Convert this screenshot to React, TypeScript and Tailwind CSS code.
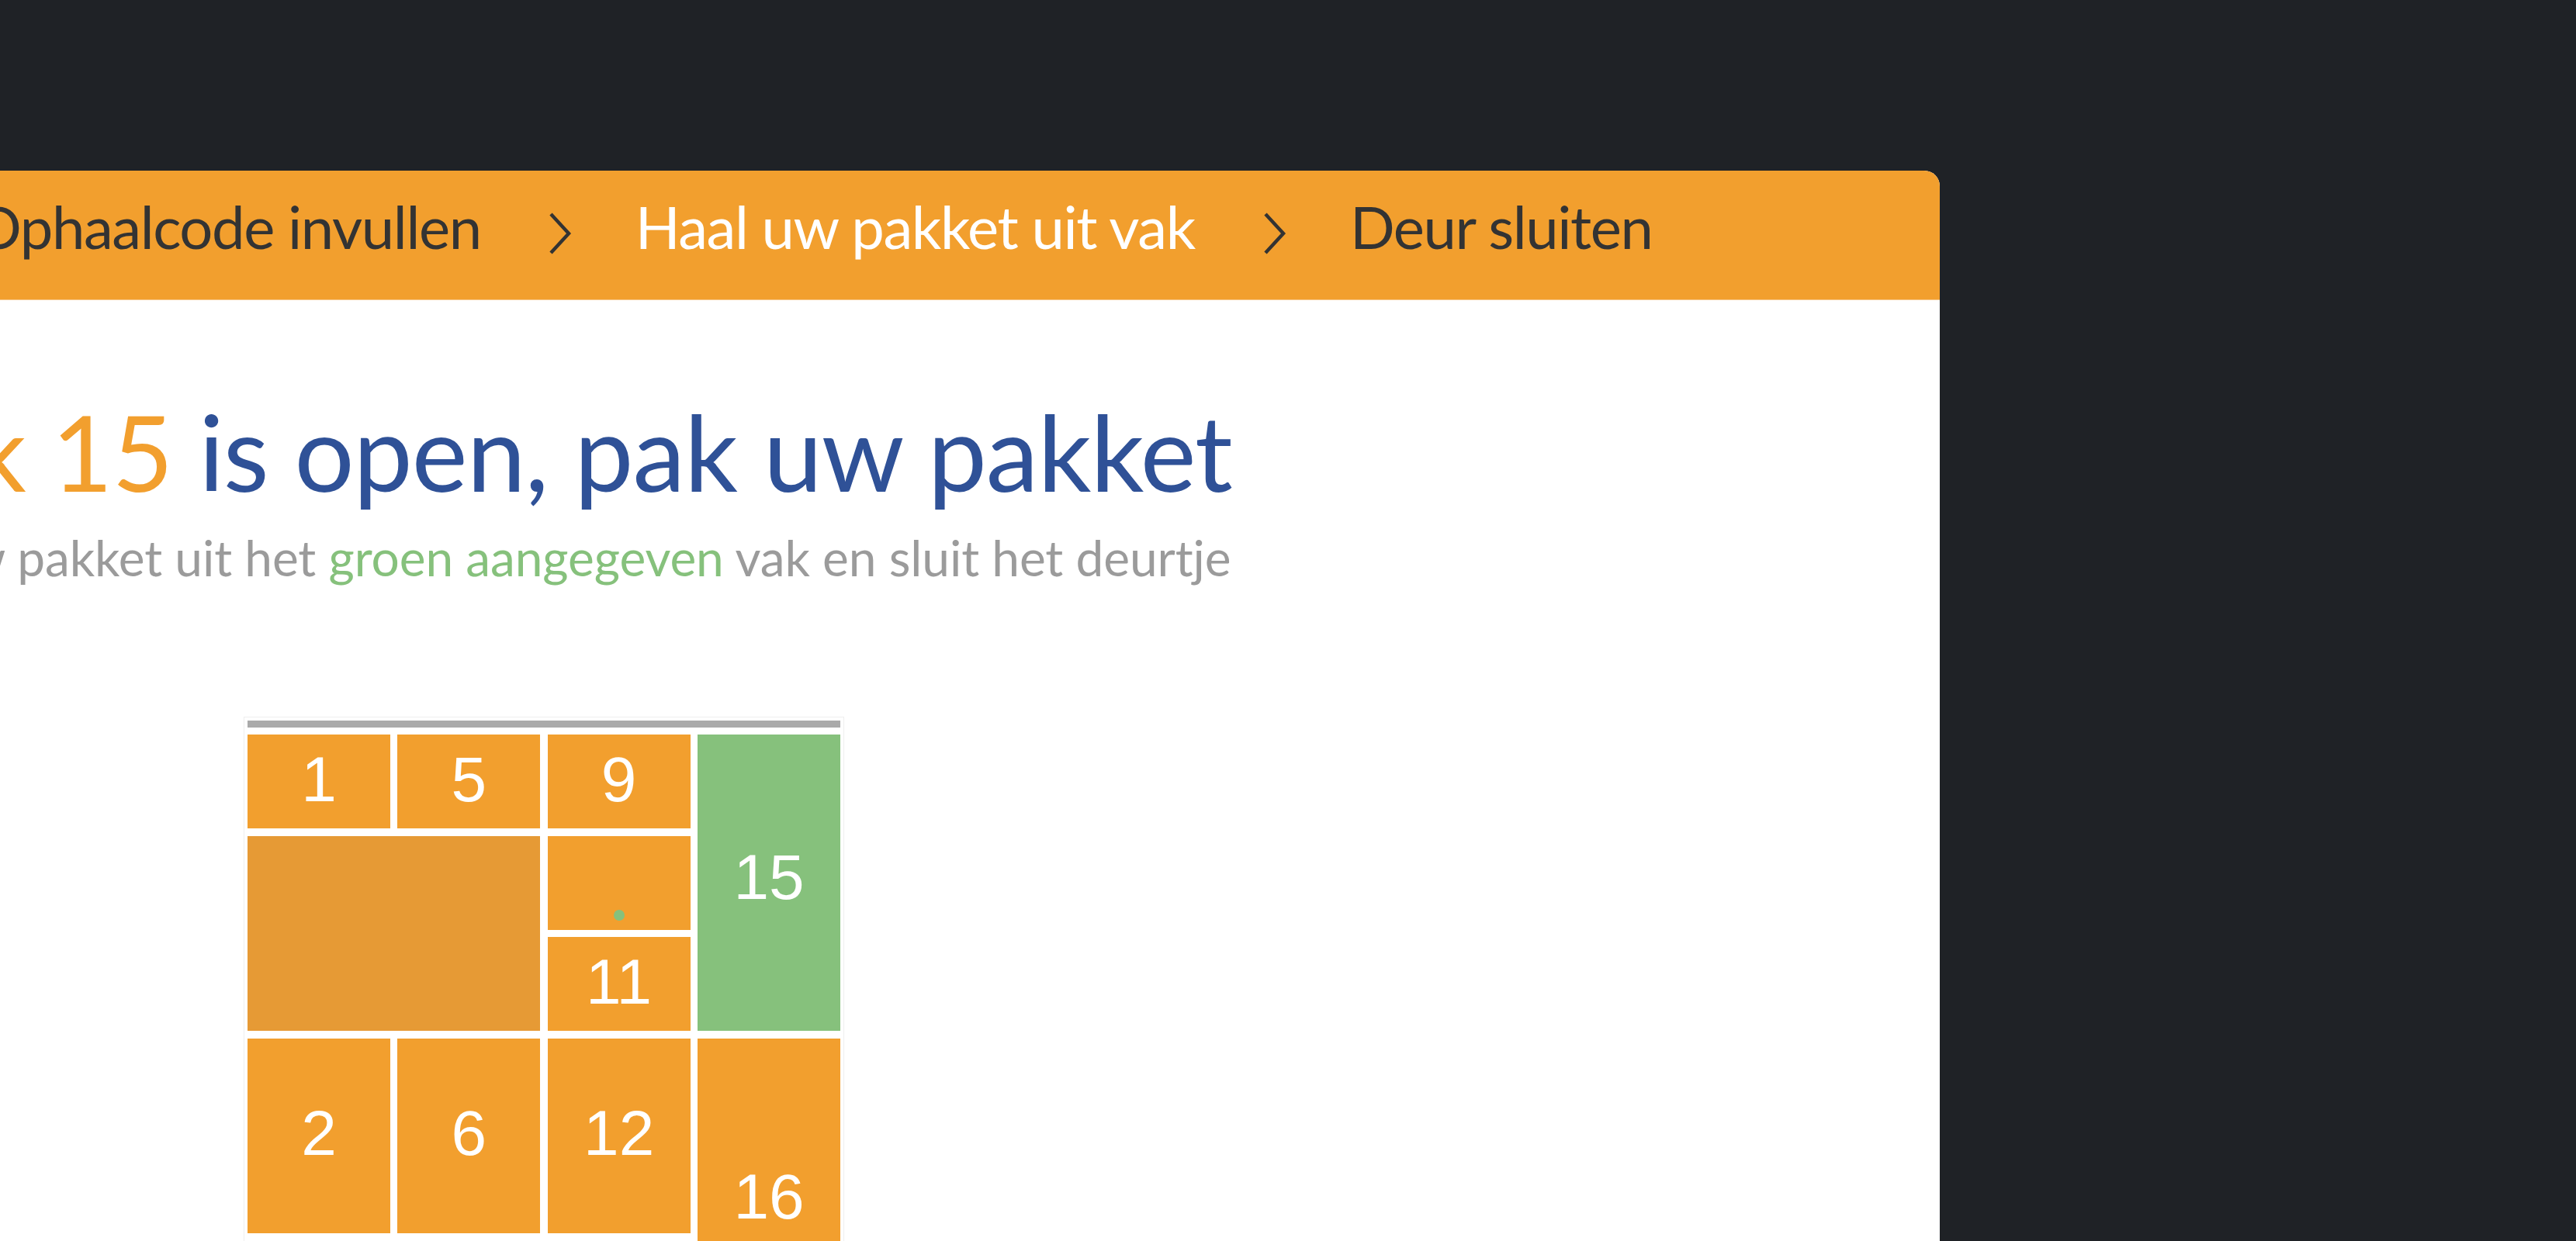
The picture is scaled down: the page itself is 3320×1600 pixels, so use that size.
import React from "react";

const ORANGE = "bg-[#f29f2e]";

function Chevron() {
  return (
    <svg
      width="30"
      height="54"
      viewBox="0 0 30 54"
      className="mt-[18px] shrink-0"
      fill="none"
      stroke="#333333"
      strokeWidth="4.5"
      strokeLinecap="butt"
      strokeLinejoin="miter"
    >
      <polyline points="3,2 26,27 3,52" />
    </svg>
  );
}

interface CellProps {
  label?: string;
  className: string;
  dot?: boolean;
}

function Cell({ label, className, dot }: CellProps) {
  return (
    <div
      className={`relative flex items-center justify-center pb-[6px] text-white text-[82px] leading-none font-['Liberation_Sans',Arial,sans-serif] ${className}`}
    >
      {label}
      {dot && (
        <span className="absolute bottom-[12px] left-1/2 -translate-x-1/2 h-[14px] w-[14px] rounded-full bg-[#86c17c]" />
      )}
    </div>
  );
}

function Lockers() {
  return (
    <div className="ml-[554px] mt-[173px] inline-block border border-[#efefef] p-[4px]">
      <div className="h-[9px] bg-[#aaaaaa] mb-[9px]" />
      <div className="grid grid-cols-[repeat(4,184px)] auto-rows-[121px] gap-x-[9.33px] gap-y-[9.5px]">
        <Cell label="1" className={`col-start-1 row-start-1 ${ORANGE}`} />
        <Cell label="5" className={`col-start-2 row-start-1 ${ORANGE}`} />
        <Cell label="9" className={`col-start-3 row-start-1 ${ORANGE}`} />
        <Cell label="15" className="col-start-4 row-start-1 row-span-3 pb-[14px] bg-[#86c17c]" />
        <Cell className="col-start-1 col-span-2 row-start-2 row-span-2 bg-[#e69a35]" />
        <Cell dot className={`col-start-3 row-start-2 ${ORANGE}`} />
        <Cell label="11" className={`col-start-3 row-start-3 ${ORANGE}`} />
        <Cell label="2" className={`col-start-1 row-start-4 row-span-2 ${ORANGE}`} />
        <Cell label="6" className={`col-start-2 row-start-4 row-span-2 ${ORANGE}`} />
        <Cell label="12" className={`col-start-3 row-start-4 row-span-2 ${ORANGE}`} />
        <Cell label="16" className={`col-start-4 row-start-4 row-span-3 self-start h-[414px] ${ORANGE}`} />
        <Cell label="3" className={`col-start-1 row-start-6 row-span-2 ${ORANGE}`} />
        <Cell label="7" className={`col-start-2 row-start-6 row-span-2 ${ORANGE}`} />
        <Cell label="13" className={`col-start-3 row-start-6 row-span-2 ${ORANGE}`} />
      </div>
    </div>
  );
}

export default function App() {
  return (
    <div className="h-[1600px] w-[3320px] overflow-hidden bg-[#1f2226] pt-[220px] font-['Lato',sans-serif]">
      <div className="-ml-[240px] w-[2740px] h-[1380px] bg-white rounded-tr-[20px] overflow-hidden">
        <div className="flex items-center h-[167px] pb-[22px] pl-[207px] bg-[#f29f2e] border-b border-[#f6c78a] text-[76px] leading-none tracking-[-1.4px] whitespace-nowrap">
          <span className="text-[#333333]">Ophaalcode invullen</span>
          <span className="ml-[87px] mr-[82px] flex">
            <Chevron />
          </span>
          <span className="text-white">Haal uw pakket uit vak</span>
          <span className="ml-[88px] mr-[82px] flex">
            <Chevron />
          </span>
          <span className="text-[#333333]">Deur sluiten</span>
        </div>

        <h1 className="mt-[127px] pl-[57px] text-[136px] leading-none font-normal tracking-[-1px] whitespace-nowrap text-[#2f5197]">
          <span className="text-[#f29f2e]">Vak 15</span> is open, pak uw pakket
        </h1>
        <p className="mt-[37px] pl-[19px] text-[64px] leading-none tracking-[-0.1px] whitespace-nowrap text-[#9b9b9b]">
          Haal uw pakket uit het <span className="text-[#86c17c]">groen aangegeven</span> vak en sluit het deurtje
        </p>

        <Lockers />
      </div>
    </div>
  );
}
